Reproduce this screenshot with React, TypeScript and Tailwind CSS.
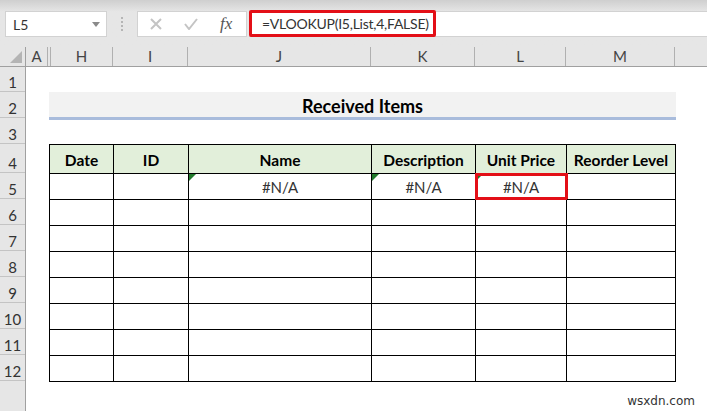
const cols = [
  { label: "A", w: "w-[22px]" },
  { label: "", w: "w-[3px]" },
  { label: "H", w: "w-[62px]" },
  { label: "I", w: "w-[75px]" },
  { label: "J", w: "w-[183px]" },
  { label: "K", w: "w-[104px]" },
  { label: "L", w: "w-[91px]" },
  { label: "M", w: "w-[109px]" },
];
const rowHeads = [
  { n: 1, h: "h-[25px]" },
  { n: 2, h: "h-[26px]" },
  { n: 3, h: "h-[26px]" },
  { n: 4, h: "h-[29px]" },
  { n: 5, h: "h-[26px]" },
  { n: 6, h: "h-[26px]" },
  { n: 7, h: "h-[26px]" },
  { n: 8, h: "h-[26px]" },
  { n: 9, h: "h-[26px]" },
  { n: 10, h: "h-[26px]" },
  { n: 11, h: "h-[26px]" },
  { n: 12, h: "h-[26px]" },
];
const headers = ["Date", "ID", "Name", "Description", "Unit Price", "Reorder Level"];
const widths = ["w-[64px]", "w-[75px]", "w-[183px]", "w-[104px]", "w-[91px]", "w-[109px]"];
const font = { fontFamily: "Lato, 'Open Sans', sans-serif" };

function Corner() {
  return (
    <svg className="absolute left-0 top-0" width="7" height="7" viewBox="0 0 7 7">
      <path d="M0 0H7L0 7Z" fill="#217a2b" />
    </svg>
  );
}

export default function App() {
  return (
    <div className="relative w-[707px] h-[411px] overflow-hidden bg-white text-[#222]" style={font}>
      <div className="h-[47px] bg-gradient-to-b from-[#cfcfcf] via-[#e6e6e6] via-[25%] to-[#e6e6e6] pt-[11px] flex items-start">
        <div className="ml-[5px] w-[102px] h-[26px] bg-white border border-[#d2d2d2] flex items-center justify-between pl-[7px] pr-[6px] text-[14px] text-[#333]">
          <span>L5</span>
          <svg width="8" height="5" viewBox="0 0 8 5"><path d="M0 0H8L4 5Z" fill="#8a8a8a" /></svg>
        </div>
        <div className="w-[30px] h-[26px] flex flex-col items-center justify-center gap-[2px]">
          <span className="w-[2px] h-[2px] bg-[#b5b5b5]" />
          <span className="w-[2px] h-[2px] bg-[#b5b5b5]" />
          <span className="w-[2px] h-[2px] bg-[#b5b5b5]" />
          <span className="w-[2px] h-[2px] bg-[#b5b5b5]" />
        </div>
        <div className="w-[110px] h-[26px] bg-white border border-[#d2d2d2] flex items-center">
          <svg className="ml-[12px]" width="12" height="12" viewBox="0 0 12 12"><path d="M1 1L11 11M11 1L1 11" stroke="#c4c4c4" strokeWidth="2" /></svg>
          <svg className="ml-[22px]" width="14" height="12" viewBox="0 0 14 12"><path d="M1 6L5 11L13 1" stroke="#c4c4c4" strokeWidth="2" fill="none" /></svg>
          <span className="ml-[22px] text-[17px] italic text-[#555]" style={{ fontFamily: "'Liberation Serif', serif" }}>fx</span>
        </div>
        <div className="flex-1 ml-[2px] h-[26px] bg-white border-y border-[#d2d2d2] flex items-center">
          <div className="relative -mt-px w-[187px] h-[27px] border-[3px] border-[#e30f17] rounded-[2px] flex items-center pl-[10px] text-[14px] tracking-[-0.25px] text-[#333] whitespace-nowrap">
            =VLOOKUP(I5,List,4,FALSE)
          </div>
        </div>
      </div>

      <div className="flex h-[20px] bg-[#e6e6e6] border-b-[1.5px] border-[#a0a0a0]">
        <div className="w-[26px] shrink-0 border-r border-[#a0a0a0] flex items-end justify-end pr-[3px] pb-[3px]">
          <svg width="12" height="12" viewBox="0 0 12 12"><path d="M12 0V12H0Z" fill="#b4b4b4" /></svg>
        </div>
        {cols.map((c, i) => (
          <div key={i} className={`${c.w} shrink-0 border-r border-[#b0b0b0] flex items-center justify-center text-[15px] text-[#444]`}>
            {c.label}
          </div>
        ))}
      </div>

      <div className="flex">
        <div className="w-[26px] shrink-0 h-[345px] bg-[#e6e6e6] border-r border-[#a0a0a0]">
          {rowHeads.map((r) => (
            <div key={r.n} className={`${r.h} border-b border-[#c4c4c4] flex items-end justify-center pb-[1.5px] leading-none text-[15px] text-[#333]`}>
              {r.n}
            </div>
          ))}
        </div>
        <div className="pl-[23px] pt-[25px]">
          <div className="w-[627px] h-[28px] bg-[#f2f2f2] border-b-[3px] border-[#a9bcdc] flex items-center justify-center pt-1 font-bold text-[18px] text-black">
            Received Items
          </div>
          <div className="mt-[24px] w-[627px] border-l border-t border-black text-black">
            <div className="flex h-[29px]">
              {headers.map((h, i) => (
                <div key={h} className={`${widths[i]} shrink-0 bg-[#e2efda] border-r border-b border-black flex items-center justify-center pt-[3px] font-bold text-[15.5px] whitespace-nowrap`}>
                  {h}
                </div>
              ))}
            </div>
            {[0, 1, 2, 3, 4, 5, 6, 7].map((r) => (
              <div key={r} className="flex h-[26px]">
                {widths.map((w, i) => {
                  const val = r === 0 && i >= 2 && i <= 4;
                  return (
                    <div key={i} className={`${w} shrink-0 relative border-r border-b border-black flex items-center justify-center pt-[1px] text-[15px] text-[#333]`}>
                      {val && "#N/A"}
                      {val && <Corner />}
                      {val && i === 4 && <div className="absolute -left-px -top-px w-[93px] h-[27px] border-[3px] border-[#e30f17]" />}
                    </div>
                  );
                })}
              </div>
            ))}
          </div>
        </div>
      </div>

      <div className="absolute right-[12px] bottom-[1px] text-[12px] text-[#333]" style={{ fontFamily: "'DejaVu Sans', sans-serif" }}>wsxdn.com</div>
    </div>
  );
}
